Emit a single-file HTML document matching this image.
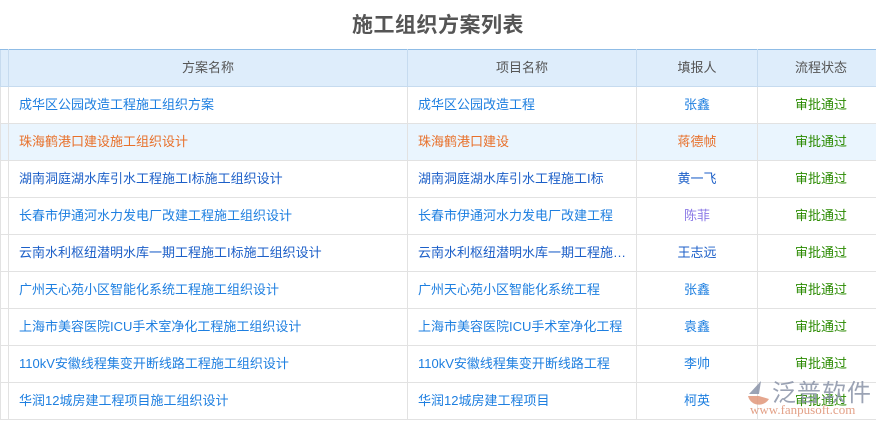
<!DOCTYPE html>
<html><head><meta charset="utf-8"><style>
body{margin:0;width:876px;height:424px;overflow:hidden;background:#fff;font-family:"Liberation Sans","Noto Sans CJK SC",sans-serif;position:relative}
h1{margin:0;position:absolute;top:9px;left:0;width:876px;text-align:center;font-size:21px;font-weight:bold;color:#555;letter-spacing:0.5px}
table{position:absolute;top:49px;left:0;border-collapse:collapse;width:884px;table-layout:fixed;font-size:13px;line-height:16px}
th{background:#deedfb;color:#555;font-weight:normal;height:36px;padding:0;border:1px solid #c6dbef;border-top:1px solid #8fbce6;box-sizing:border-box}
td{height:37px;box-sizing:border-box;border:1px solid #e2e2e2;padding:0;white-space:nowrap;overflow:hidden}
td.l{padding-left:10px}
td.c{text-align:center}
tr.h td{background:#eaf5fe}
.g{color:#2a8a00}
.b{color:#1e7fe0}.o{color:#e8702a}.d{color:#1c5fc8}.p{color:#8a78e6}
</style></head><body>
<h1>施工组织方案列表</h1>
<table>
<colgroup><col style="width:8px"><col style="width:399px"><col style="width:229px"><col style="width:121px"><col style="width:127px"></colgroup>
<tr style="height:37px"><th></th><th>方案名称</th><th>项目名称</th><th>填报人</th><th>流程状态</th></tr>
<tr><td></td><td class="l b">成华区公园改造工程施工组织方案</td><td class="l b">成华区公园改造工程</td><td class="c b">张鑫</td><td class="c g">审批通过</td></tr>
<tr class="h"><td></td><td class="l o">珠海鹤港口建设施工组织设计</td><td class="l o">珠海鹤港口建设</td><td class="c o">蒋德帧</td><td class="c g">审批通过</td></tr>
<tr><td></td><td class="l d">湖南洞庭湖水库引水工程施工I标施工组织设计</td><td class="l d">湖南洞庭湖水库引水工程施工I标</td><td class="c d">黄一飞</td><td class="c g">审批通过</td></tr>
<tr><td></td><td class="l b">长春市伊通河水力发电厂改建工程施工组织设计</td><td class="l b">长春市伊通河水力发电厂改建工程</td><td class="c p">陈菲</td><td class="c g">审批通过</td></tr>
<tr><td></td><td class="l d">云南水利枢纽潜明水库一期工程施工I标施工组织设计</td><td class="l d">云南水利枢纽潜明水库一期工程施…</td><td class="c d">王志远</td><td class="c g">审批通过</td></tr>
<tr><td></td><td class="l b">广州天心苑小区智能化系统工程施工组织设计</td><td class="l b">广州天心苑小区智能化系统工程</td><td class="c b">张鑫</td><td class="c g">审批通过</td></tr>
<tr><td></td><td class="l b">上海市美容医院ICU手术室净化工程施工组织设计</td><td class="l b">上海市美容医院ICU手术室净化工程</td><td class="c b">袁鑫</td><td class="c g">审批通过</td></tr>
<tr><td></td><td class="l b">110kV安徽线程集变开断线路工程施工组织设计</td><td class="l b">110kV安徽线程集变开断线路工程</td><td class="c b">李帅</td><td class="c g">审批通过</td></tr>
<tr><td></td><td class="l b">华润12城房建工程项目施工组织设计</td><td class="l b">华润12城房建工程项目</td><td class="c b">柯英</td><td class="c g">审批通过</td></tr>
</table>
<div style="position:absolute;left:746px;top:380px;width:26px;height:28px">
<svg width="26" height="28" viewBox="0 0 26 28"><path d="M15 1 L3 14 L13 14 Z" fill="#8a93a8" opacity=".85"/><path d="M2 16 C5 27 18 27 23 19 L13 16 Z" fill="#e0967a" opacity=".85"/></svg></div>
<div style="position:absolute;left:772px;top:373px;font-size:24px;color:#8a93a8;opacity:.85;letter-spacing:1px">泛普软件</div>
<div style="position:absolute;left:750px;top:402px;font-size:13px;color:#e0967a;font-family:'Liberation Serif',serif;opacity:.9">www.fanpusoft.com</div>
</body></html>
